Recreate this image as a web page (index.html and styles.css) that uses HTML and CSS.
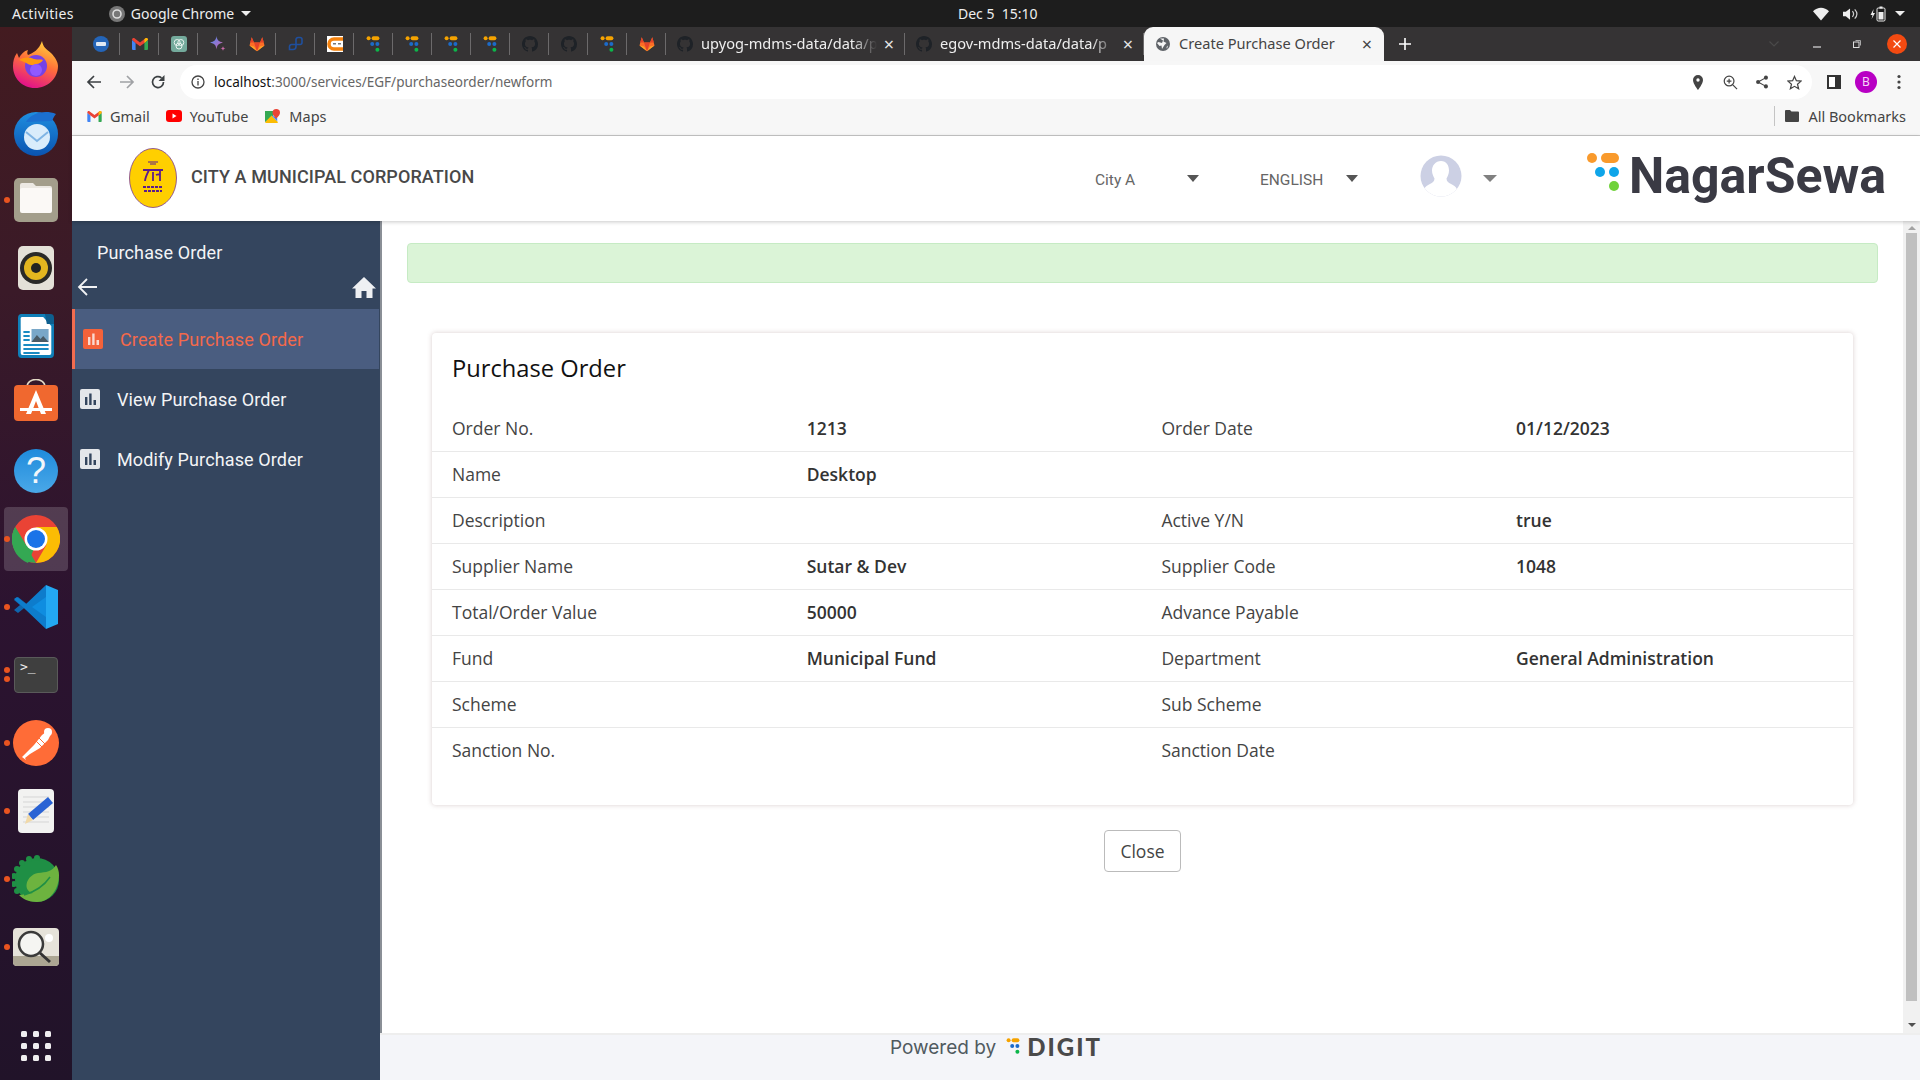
FILE: index.html
```html
<!DOCTYPE html>
<html lang="en">
<head>
<meta charset="utf-8">
<title>Create Purchase Order</title>
<link rel="stylesheet" href="styles.css">
</head>
<body>
<svg class="defs" aria-hidden="true">
  <defs>
    <symbol id="digit" viewBox="0 0 16 16">
      <circle cx="2.6" cy="2.2" r="2" fill="#f5a300"/><rect x="5.6" y="0.2" width="7.8" height="4" rx="2" fill="#f5a300"/>
      <circle cx="6.2" cy="8" r="2" fill="#1c6bc9"/><circle cx="11.4" cy="8" r="2" fill="#1c6bc9"/><circle cx="11.4" cy="13.8" r="2" fill="#0cb64a"/>
    </symbol>
    <symbol id="github" viewBox="0 0 16 16">
      <path fill="#1e2227" d="M8 0C3.58 0 0 3.58 0 8c0 3.54 2.29 6.53 5.47 7.59.4.07.55-.17.55-.38 0-.19-.01-.82-.01-1.49-2.01.37-2.53-.49-2.69-.94-.09-.23-.48-.94-.82-1.13-.28-.15-.68-.52-.01-.53.63-.01 1.08.58 1.23.82.72 1.21 1.87.87 2.33.66.07-.52.28-.87.51-1.07-1.78-.2-3.64-.89-3.64-3.95 0-.87.31-1.59.82-2.15-.08-.2-.36-1.02.08-2.12 0 0 .67-.21 2.2.82.64-.18 1.32-.27 2-.27.68 0 1.36.09 2 .27 1.53-1.04 2.2-.82 2.2-.82.44 1.1.16 1.92.08 2.12.51.56.82 1.27.82 2.15 0 3.07-1.87 3.75-3.65 3.95.29.25.54.73.54 1.48 0 1.07-.01 1.93-.01 2.2 0 .21.15.46.55.38A8.013 8.013 0 0016 8c0-4.42-3.58-8-8-8z"/>
    </symbol>
    <symbol id="gitlab" viewBox="0 0 16 16">
      <path fill="#fc6d26" d="M8 15.2.5 9.6 2.7 1.2 5 6.4h6l2.3-5.2 2.2 8.4z"/>
      <path fill="#e24329" d="M8 15.2 5 6.4h6zM2.7 1.2 5 6.4H1.2zM13.3 1.2 11 6.4h3.8z"/>
      <path fill="#fca326" d="M8 15.2.5 9.6l4.5 1zM8 15.2l7.5-5.6-4.5 1z"/>
    </symbol>
    <symbol id="gmail" viewBox="0 0 16 12">
      <path fill="#4285f4" d="M0 2v9a1 1 0 0 0 1 1h2.6V5z"/>
      <path fill="#34a853" d="M16 2v9a1 1 0 0 1-1 1h-2.6V5z"/>
      <path fill="#ea4335" d="M0 1.8C0 .4 1.6-.4 2.8.5L8 4.4l5.2-3.9C14.4-.4 16 .4 16 1.8L12.4 5 8 8.2 3.6 5z"/>
      <path fill="#fbbc04" d="M12.4 1.1 13.2.5C14.4-.4 16 .4 16 1.8L12.4 5z"/>
    </symbol>
    <symbol id="bars" viewBox="0 0 20 20">
      <rect class="bars-bg" width="20" height="20" rx="2"/>
      <path class="bars-fg" d="M5 8h2.4v8H5zM9.2 4.500h2.4V16H9.2zM13.500 11H16v5h-2.500z"/>
    </symbol>
  </defs>
</svg>

<header class="topbar">
  <span class="top-activities">Activities</span>
  <span class="top-app">
    <svg class="top-chrome" viewBox="0 0 16 16"><circle cx="8" cy="8" r="8" fill="#777"/><circle cx="8" cy="8" r="4" fill="none" stroke="#ddd" stroke-width="1.600"/></svg>
    Google Chrome <i class="caret caret-top"></i>
  </span>
  <time class="top-clock">Dec 5&nbsp; 15:10</time>
  <span class="top-tray">
    <svg viewBox="0 0 16 14" class="tray-wifi"><path fill="#eee" d="M0 4.300C4.500-.6 11.500-.6 16 4.300L8 13.500z"/></svg>
    <svg viewBox="0 0 16 14" class="tray-vol"><path fill="#eee" d="M0 4.500h3L7.500 1v12L3 9.500H0z"/><path d="M10 4c1.600 1.800 1.600 4.200 0 6M12.500 2c2.800 3 2.800 7 0 10" fill="none" stroke="#ccc" stroke-width="1.300"/></svg>
    <svg viewBox="0 0 16 16" class="tray-bat"><path fill="#eee" d="M3.600 3 .5 9h2L1.600 13 5 7H3z"/><rect x="7" y="2" width="8" height="13" rx="1.200" fill="none" stroke="#eee"/><rect x="9.500" y=".5" width="3" height="2" fill="#eee"/><rect x="8.500" y="6" width="5" height="7.500" fill="#eee"/></svg>
    <i class="caret caret-top"></i>
  </span>
</header>

<div class="desktop">
  <nav class="dock">
    <div class="dock-item">
      <svg viewBox="0 0 48 48" class="dock-icon"><defs><linearGradient id="ff" x1="0.700" y1="0" x2="0.300" y2="1"><stop offset="0" stop-color="#ffd13c"/><stop offset="0.450" stop-color="#ff7139"/><stop offset="0.950" stop-color="#e31587"/></linearGradient></defs><path fill="url(#ff)" d="M30 1c1 6 4 8 9 12 4 4 7 9 7 13 0 12-10 22-23 22S1 38 1 26c0-5 1-9 4-13l2 5c2-4 5-7 9-8-1 2-1 4 0 5 5-2 11-5 14-14z"/><circle cx="24" cy="26" r="11" fill="#7542e5"/><path fill="#ff980e" d="M7 20c5-3 10-3 15-1 4 1 7 0 9 1-1 2-4 4-7 4-3 2-6 1-8 0-3-2-6-3-9-4z"/><circle cx="24" cy="30" r="6" fill="#9059ff"/></svg>
    </div>
    <div class="dock-item">
      <svg viewBox="0 0 48 48" class="dock-icon"><defs><linearGradient id="tb" x1="0" y1="0" x2="0" y2="1"><stop offset="0" stop-color="#1f8fe0"/><stop offset="1" stop-color="#0a53b0"/></linearGradient></defs><circle cx="24" cy="26" r="22" fill="url(#tb)"/><path fill="#1b6fd0" d="M14 14C20 4 34 2 44 6c-2 2-3 5-4 7z"/><circle cx="25" cy="29" r="13" fill="#d9ecfb"/><path d="M14 24l11 9 11-9" fill="none" stroke="#7fb4e4" stroke-width="2"/></svg>
    </div>
    <div class="dock-item">
      <i class="dock-dot"></i>
      <svg viewBox="0 0 48 48" class="dock-icon"><rect x="2" y="2" width="44" height="44" rx="5" fill="#a39e8b"/><path fill="#ece9e3" d="M8 9a2 2 0 0 1 2-2h11l3 3h14a2 2 0 0 1 2 2v2H8z"/><rect x="8" y="12" width="32" height="25" rx="2" fill="#fbf9f6"/></svg>
    </div>
    <div class="dock-item">
      <svg viewBox="0 0 48 48" class="dock-icon"><rect x="6" y="2" width="36" height="44" rx="5" fill="#e4e1d8"/><circle cx="24" cy="24" r="16" fill="#2a2a28"/><circle cx="24" cy="24" r="12" fill="#e3b61f"/><circle cx="24" cy="24" r="5" fill="#222"/></svg>
    </div>
    <div class="dock-item">
      <svg viewBox="0 0 48 48" class="dock-icon"><g transform="translate(2.400 0) scale(.9 1)"><path fill="#0f7fb8" d="M8 2h26l10 10v30a4 4 0 0 1-4 4H8a4 4 0 0 1-4-4V6a4 4 0 0 1 4-4z"/><path fill="#fff" d="M8 5h24l9 9v27a2 2 0 0 1-2 2H9a2 2 0 0 1-2-2V6z"/><path fill="#0e5f8f" d="M34 2h6a4 4 0 0 1 4 4v6h-8z"/><path fill="#1a8ac2" d="M10 19h7v2h-7zM10 23h7v2h-7zM10 27h7v2h-7zM10 32h28v2H10zM10 36h28v2H10zM10 40h18v2H10z"/><rect x="19" y="17" width="19" height="13" fill="#79a7c8"/><path fill="#4a5b66" d="M19 30l6-7 4 4 3-3 6 6z"/></g></svg>
    </div>
    <div class="dock-item">
      <svg viewBox="0 0 48 48" class="dock-icon"><path d="M15 8c0-10 18-10 18 0" fill="none" stroke="#e3d9c5" stroke-width="1.600"/><rect x="2" y="6" width="44" height="36" rx="4" fill="#f0682f"/><path fill="#fff" d="M24 11l10 24h-5l-5-13-5 13h-5zM8 29h32v3H8z"/></svg>
    </div>
    <div class="dock-item">
      <span class="dock-help">?</span>
    </div>
    <div class="dock-item dock-active">
      <i class="dock-dot"></i>
      <svg viewBox="0 0 48 48" class="dock-icon"><circle cx="24" cy="24" r="24" fill="#ea4335"/><path fill="#34a853" d="M3.2 12 14 30l10-1-8 19C6 44 0 35 0 24c0-4 1-8 3.200-12z"/><path fill="#34a853" d="M24 48A24 24 0 0 1 3.200 12L14 30.500 24 48z"/><path fill="#fbbc04" d="M24 48 34.400 30 24 12h20.800A24 24 0 0 1 24 48z"/><circle cx="24" cy="24" r="11.500" fill="#fff"/><circle cx="24" cy="24" r="9" fill="#1a73e8"/></svg>
    </div>
    <div class="dock-item">
      <i class="dock-dot"></i>
      <svg viewBox="0 0 48 48" class="dock-icon"><path fill="#0f65ad" d="M2 17l4-3 10 8-10 8-4-3 6-5z"/><path fill="#0d7ccc" d="M34 2 14 21 5 14 2 16l12 11L34 46z"/><path fill="#23a8f2" d="M34 2l12 5v34l-12 5z"/><path fill="#0f8de0" d="M34 14v20L20 24z"/></svg>
    </div>
    <div class="dock-item">
      <i class="dock-dot dot-term-a"></i><i class="dock-dot dot-term-b"></i>
      <div class="dock-term"><span>&gt;_</span></div>
    </div>
    <div class="dock-item">
      <i class="dock-dot"></i>
      <svg viewBox="0 0 48 48" class="dock-icon"><circle cx="24" cy="24" r="23" fill="#ff6c37"/><path fill="#fff" d="M10 38 22 26l8-10 4-3 5 2-3 6-8 8-10 6-5 4 1 2z"/><circle cx="36" cy="13" r="4" fill="#fff"/><path d="M24 22l6 6M27 19l6 6" stroke="#ff6c37"/></svg>
    </div>
    <div class="dock-item">
      <i class="dock-dot"></i>
      <svg viewBox="0 0 48 48" class="dock-icon"><rect x="6" y="2" width="36" height="44" rx="4" fill="#f2f2f1"/><path stroke="#d5d5d5" d="M11 10h26M11 15h26M11 20h26M11 25h26M11 30h26M11 35h26"/><path fill="#2a63d4" d="M36 10l5 6-20 17-5-6z"/><path fill="#f1d9a8" d="M16 27l5 6-8 4z"/></svg>
    </div>
    <div class="dock-item">
      <i class="dock-dot"></i>
      <svg viewBox="0 0 48 48" class="dock-icon"><circle cx="25" cy="25" r="22" fill="#1f8f45"/><g fill="#1f8f45"><circle cx="25" cy="3" r="3"/><circle cx="17" cy="4" r="3"/><circle cx="10" cy="8" r="3"/><circle cx="5" cy="14" r="3"/><circle cx="2" cy="21" r="3"/><circle cx="2" cy="29" r="3"/><circle cx="5" cy="36" r="3"/></g><path fill="#6db33f" d="M47 20c0 14-9 27-22 27-9 0-14-3-18-7 8-1 14-2 14-2C10 36 14 20 26 18c8-1 14-1 18-8 2 3 3 6 3 10z"/><path d="M12 40c10-3 20-9 26-18" stroke="#1f8f45" stroke-width="1.500" fill="none"/></svg>
    </div>
    <div class="dock-item">
      <i class="dock-dot"></i>
      <svg viewBox="0 0 48 48" class="dock-icon"><rect x="1" y="5" width="46" height="38" rx="4" fill="#e6e3da"/><path fill="#aca693" d="M1 33h46v6a4 4 0 0 1-4 4H5a4 4 0 0 1-4-4z"/><circle cx="19" cy="21" r="12" fill="#f5f5f2" stroke="#3a3a3a" stroke-width="2.500"/><path d="M28 30l10 9" stroke="#333" stroke-width="3"/><circle cx="37" cy="15" r="4" fill="#fff"/></svg>
    </div>
    <div class="dock-grid"><i></i><i></i><i></i><i></i><i></i><i></i><i></i><i></i><i></i></div>
  </nav>

  <div class="browser">
    <div class="tabstrip">
      <span class="pin">
        <svg viewBox="0 0 16 16"><circle cx="8" cy="8" r="8" fill="#2465b8"/><rect x="3" y="6" width="10" height="4" rx="1" fill="#dfe9f5"/></svg>
      </span>
      <span class="pin"><svg viewBox="0 0 16 12"><use href="#gmail"/></svg></span>
      <span class="pin">
        <svg viewBox="0 0 16 16"><rect width="16" height="16" rx="3" fill="#74aa9c"/><circle cx="6.200" cy="6.500" r="3" fill="none" stroke="#e8f2ef"/><circle cx="9.800" cy="6.500" r="3" fill="none" stroke="#e8f2ef"/><circle cx="8" cy="10" r="3" fill="none" stroke="#e8f2ef"/></svg>
      </span>
      <span class="pin">
        <svg viewBox="0 0 16 16"><defs><linearGradient id="gem" x1="0" y1="0" x2="1" y2="1"><stop offset="0" stop-color="#4b8df0"/><stop offset="0.600" stop-color="#9b72cb"/><stop offset="1" stop-color="#d96570"/></linearGradient></defs><path fill="url(#gem)" d="M6.500 0C7 4 8.500 5.500 13 6.500 8.500 7.500 7 9 6.500 13.500 6 9 4.500 7.500 0 6.500 4.500 5.500 6 4 6.500 0z"/><path fill="#c86aa8" d="M13 10c.2 1.500.8 2.200 2.500 2.500-1.700.3-2.300 1-2.500 2.500-.2-1.500-.8-2.200-2.500-2.500 1.700-.3 2.300-1 2.500-2.500z"/></svg>
      </span>
      <span class="pin"><svg viewBox="0 0 16 16"><use href="#gitlab"/></svg></span>
      <span class="pin">
        <svg viewBox="0 0 16 16"><path d="M1.500 13.500v-3a2 2 0 0 1 2-2H12a2 2 0 0 0 2-2v-3A2 2 0 0 0 12 1.500h-2a2 2 0 0 0-2 2v7a3 3 0 0 1-3 3z" fill="none" stroke="#1f4f9e" stroke-width="1.600"/></svg>
      </span>
      <span class="pin">
        <svg viewBox="0 0 16 16"><rect width="16" height="16" fill="#fff"/><path d="M16 3H7a5 5 0 0 0 0 10h9" fill="none" stroke="#f5820d" stroke-width="3.500"/><rect x="6" y="7" width="3" height="1.500" fill="#777"/><rect x="11" y="7" width="3" height="1.500" fill="#777"/></svg>
      </span>
      <span class="pin"><svg viewBox="0 0 16 16"><use href="#digit"/></svg></span>
      <span class="pin"><svg viewBox="0 0 16 16"><use href="#digit"/></svg></span>
      <span class="pin"><svg viewBox="0 0 16 16"><use href="#digit"/></svg></span>
      <span class="pin"><svg viewBox="0 0 16 16"><use href="#digit"/></svg></span>
      <span class="pin"><svg viewBox="0 0 16 16"><use href="#github"/></svg></span>
      <span class="pin"><svg viewBox="0 0 16 16"><use href="#github"/></svg></span>
      <span class="pin"><svg viewBox="0 0 16 16"><use href="#digit"/></svg></span>
      <span class="pin pin-last"><svg viewBox="0 0 16 16"><use href="#gitlab"/></svg></span>
      <span class="tab tab-sep">
        <svg viewBox="0 0 16 16"><use href="#github"/></svg>
        <span class="tab-title">upyog-mdms-data/data/p</span>
        <span class="tab-x">×</span>
      </span>
      <span class="tab tab-sep">
        <svg viewBox="0 0 16 16"><use href="#github"/></svg>
        <span class="tab-title">egov-mdms-data/data/p</span>
        <span class="tab-x">×</span>
      </span>
      <span class="tab tab-active">
        <svg viewBox="0 0 16 16"><circle cx="8" cy="8" r="7" fill="#5f6368"/><path fill="#f6f6f6" d="M5 2.500 8 4.500 7 7 3.500 6 2 7 4.500 10 6.500 9.500 7 13 9.500 9l2-2-3-1.500.5-3zM13 9.500l-1.500 1.500.5 2z"/></svg>
        <span class="tab-title">Create Purchase Order</span>
        <span class="tab-x">×</span>
      </span>
      <span class="tab-new">
        <svg viewBox="0 0 12 12"><path d="M6 0v12M0 6h12" stroke="#fff" stroke-width="1.600"/></svg>
      </span>
      <span class="win-ctrls">
        <svg class="win-chev" viewBox="0 0 10 6"><path d="M.5.5 5 5 9.500.5" fill="none" stroke="#4a4a4a" stroke-width="1.200"/></svg>
        <svg class="win-min" viewBox="0 0 8 8"><path d="M0 7h8" stroke="#ddd" stroke-width="1.200"/></svg>
        <svg class="win-max" viewBox="0 0 8 8"><rect x=".5" y="2" width="5.500" height="5.500" fill="none" stroke="#ddd"/><path d="M2.500 .5h5v5" fill="none" stroke="#aaa"/></svg>
        <span class="win-close"><svg viewBox="0 0 8 8"><path d="M.5.5l7 7M7.500.5l-7 7" stroke="#fff" stroke-width="1.200"/></svg></span>
      </span>
    </div>

    <div class="toolbar">
      <svg class="tb-ic tb-back" viewBox="0 0 16 16"><path d="M15 8H2M8 2 2 8l6 6" fill="none" stroke="#3c4043" stroke-width="1.700"/></svg>
      <svg class="tb-ic tb-fwd" viewBox="0 0 16 16"><path d="M1 8h13M8 2l6 6-6 6" fill="none" stroke="#a0a2a5" stroke-width="1.700"/></svg>
      <svg class="tb-ic tb-rel" viewBox="0 0 16 16"><path d="M13.500 8A5.500 5.500 0 1 1 11.500 3.800" fill="none" stroke="#3c4043" stroke-width="1.700"/><path d="M14.500 1v6h-6z" fill="#3c4043"/></svg>
      <div class="omnibox">
        <svg class="omni-info" viewBox="0 0 14 14"><circle cx="7" cy="7" r="6" fill="none" stroke="#444" stroke-width="1.300"/><path d="M7 6v4.500M7 3.500v1.500" stroke="#444" stroke-width="1.300"/></svg>
        <span class="url"><b>localhost</b>:3000/services/EGF/purchaseorder/newform</span>
        <span class="omni-right">
          <svg viewBox="0 0 14 18" class="om-pin"><path fill="#444" fill-rule="evenodd" d="M7 0a6 6 0 0 1 6 6c0 4.500-6 12-6 12S1 10.500 1 6a6 6 0 0 1 6-6zm0 4a2 2 0 1 0 0 4 2 2 0 0 0 0-4z"/></svg>
          <svg viewBox="0 0 16 16" class="om-zoom"><circle cx="6.500" cy="6.500" r="5.200" fill="none" stroke="#444" stroke-width="1.300"/><path d="M10.500 10.500 15 15M6.500 4v5M4 6.500h5" stroke="#444" stroke-width="1.300"/></svg>
          <svg viewBox="0 0 16 16" class="om-share"><path d="M12.500 3 3.500 8l9 5" fill="none" stroke="#444" stroke-width="1.300"/><circle cx="12.500" cy="3" r="2.300" fill="#444"/><circle cx="3.500" cy="8" r="2.300" fill="#444"/><circle cx="12.500" cy="13" r="2.300" fill="#444"/></svg>
          <svg viewBox="0 0 16 16" class="om-star"><path d="M8 1.500l2 4.600 5 .4-3.800 3.300 1.200 4.900L8 12.100l-4.400 2.600 1.200-4.900L1 6.500l5-.4z" fill="none" stroke="#444" stroke-width="1.300"/></svg>
        </span>
      </div>
      <svg class="tb-panel" viewBox="0 0 14 14"><path fill="#333" d="M0 0h14v14H0z"/><path fill="#fff" d="M2 2h6v10H2z"/></svg>
      <span class="tb-avatar">B</span>
      <svg class="tb-menu" viewBox="0 0 4 16"><circle cx="2" cy="2.500" r="1.600" fill="#444"/><circle cx="2" cy="8" r="1.600" fill="#444"/><circle cx="2" cy="13.500" r="1.600" fill="#444"/></svg>
    </div>

    <div class="bookmarks">
      <span class="bm bm-gmail"><svg viewBox="0 0 16 12"><use href="#gmail"/></svg>Gmail</span>
      <span class="bm bm-yt"><svg viewBox="0 0 16 12"><rect width="16" height="12" rx="3" fill="#f00"/><path d="M6.500 3.500v5l4-2.500z" fill="#fff"/></svg>YouTube</span>
      <span class="bm bm-maps"><svg viewBox="0 0 16 16"><path fill="#34a853" d="M0 2h9v5L0 14z"/><path fill="#fbbc04" d="M0 14 7 7l7 7-1 1H1z"/><path fill="#4285f4" d="M7 7l6 6V9z"/><path fill="#ea4335" d="M12 0a4 4 0 0 1 4 4c0 3-4 6-4 6S8 7 8 4a4 4 0 0 1 4-4z"/></svg>Maps</span>
      <span class="bm bm-all"><svg viewBox="0 0 14 12"><path fill="#444" d="M0 1a1 1 0 0 1 1-1h4l1.500 1.500H13a1 1 0 0 1 1 1V11a1 1 0 0 1-1 1H1a1 1 0 0 1-1-1z"/></svg>All Bookmarks</span>
    </div>

    <div class="app">
      <header class="app-header">
        <svg class="city-logo" viewBox="0 0 48 60"><ellipse cx="24" cy="30" rx="23.500" ry="29.500" fill="#ffcf00" stroke="#7a3a8c" stroke-width="0.800"/><g fill="none" stroke="#5c1d8a"><path d="M19 14h10M21 16h6" stroke-width="1.200"/><path d="M14 22h20M20 22c-2 4-4 8-4 11M24 24v9M31 22v11M27 27c2-1 3-1 4 0" stroke-width="1.800"/><path d="M14 39h20M15 43h18" stroke-width="2" stroke-dasharray="3 1"/></g></svg>
        <span class="city-name">CITY A MUNICIPAL CORPORATION</span>
        <span class="hd-city">City A</span><i class="caret caret-hd caret-city"></i>
        <span class="hd-lang">ENGLISH</span><i class="caret caret-hd caret-lang"></i>
        <svg class="hd-avatar" viewBox="0 0 42 42"><clipPath id="av"><circle cx="21" cy="21" r="20.500"/></clipPath><circle cx="21" cy="21" r="20.500" fill="#ccd0e4"/><path clip-path="url(#av)" fill="#fff" d="M21 6c5.500 0 8 4.500 8 9.500 0 3.500-1.500 6-2.500 8 0 3 2 4 5.500 6 4 2 5 4 5 6v8H4v-8c0-2 1-4 5-6 3.500-2 5.500-3 5.500-6-1-2-2.500-4.500-2.500-8C12 10.500 15.500 6 21 6z"/></svg>
        <i class="caret caret-user"></i>
        <span class="brand">
          <svg class="brand-dots" viewBox="0 0 32 40"><circle cx="5" cy="5" r="5" fill="#f99a2c"/><rect x="14" y="0" width="18" height="10" rx="5" fill="#f99a2c"/><circle cx="13" cy="19" r="5" fill="#0fa5e9"/><circle cx="27" cy="19" r="5" fill="#0fa5e9"/><circle cx="27" cy="33" r="5" fill="#6fd23a"/></svg>
          <span class="brand-name">NagarSewa</span>
        </span>
      </header>

      <div class="app-body">
        <aside class="sidebar">
          <div class="side-title">Purchase Order</div>
          <div class="side-tools">
            <svg class="side-back" viewBox="0 0 20 20"><path d="M20 10H2M10 2 2 10l8 8" fill="none" stroke="#f1f2f4" stroke-width="1.800"/></svg>
            <svg class="side-home" viewBox="0 0 24 21"><path fill="#eef0f3" d="M12 0 0 11.500h3.500V21h6v-7h5v7h6v-9.500H24z"/></svg>
          </div>
          <a class="side-item side-active"><svg class="side-ic"><use href="#bars"/></svg><span>Create Purchase Order</span></a>
          <a class="side-item"><svg class="side-ic"><use href="#bars"/></svg><span>View Purchase Order</span></a>
          <a class="side-item"><svg class="side-ic"><use href="#bars"/></svg><span>Modify Purchase Order</span></a>
        </aside>

        <div class="page">
          <div class="page-scroll">
            <main class="content">
              <div class="alert"></div>
              <section class="card">
                <h2 class="card-title">Purchase Order</h2>
                <div class="row"><span class="lbl">Order No.</span><span class="val">1213</span><span class="lbl">Order Date</span><span class="val">01/12/2023</span></div>
                <div class="row"><span class="lbl">Name</span><span class="val">Desktop</span><span></span><span></span></div>
                <div class="row"><span class="lbl">Description</span><span class="val"></span><span class="lbl">Active Y/N</span><span class="val">true</span></div>
                <div class="row"><span class="lbl">Supplier Name</span><span class="val">Sutar &amp; Dev</span><span class="lbl">Supplier Code</span><span class="val">1048</span></div>
                <div class="row"><span class="lbl">Total/Order Value</span><span class="val">50000</span><span class="lbl">Advance Payable</span><span class="val"></span></div>
                <div class="row"><span class="lbl">Fund</span><span class="val">Municipal Fund</span><span class="lbl">Department</span><span class="val">General Administration</span></div>
                <div class="row"><span class="lbl">Scheme</span><span class="val"></span><span class="lbl">Sub Scheme</span><span class="val"></span></div>
                <div class="row row-last"><span class="lbl">Sanction No.</span><span class="val"></span><span class="lbl">Sanction Date</span><span class="val"></span></div>
              </section>
              <div class="actions"><button class="btn-close" type="button">Close</button></div>
            </main>
            <div class="scrollbar">
              <i class="sb-up"></i>
              <div class="sb-thumb"></div>
              <i class="sb-down"></i>
            </div>
          </div>
          <footer class="footer">
            <span class="powered">Powered by</span>
            <svg class="digit-dots" viewBox="0 0 16 16"><use href="#digit"/></svg>
            <span class="digit-word">DIGIT</span>
          </footer>
        </div>
      </div>
    </div>
  </div>
</div>
</body>
</html>
```

FILE: styles.css
```css
* { box-sizing: border-box; }
html, body { margin: 0; padding: 0; }
body {
  width: 1920px;
  height: 1080px;
  overflow: hidden;
  display: flex;
  flex-direction: column;
  font-family: "Noto Sans", "Open Sans", sans-serif;
  background: #fff;
}
.defs { width: 0; height: 0; position: absolute; }
i { display: block; font-style: normal; }

/* carets */
.caret { width: 0; height: 0; border-style: solid; border-color: transparent; border-bottom-width: 0; }
.caret-top { display: inline-block; border-width: 5px 5px 0; border-top-color: #eee; vertical-align: middle; margin-left: 1px; }
.caret-hd { border-width: 7px 6.5px 0; border-top-color: #555; }
.caret-user { border-width: 7px 7px 0; border-top-color: #808080; margin-left: 21px; }

/* GNOME top bar */
.topbar {
  height: 27px;
  flex: none;
  background: #1d1d1d;
  color: #eee;
  font-size: 14px;
  display: flex;
  align-items: center;
  position: relative;
}
.top-activities { margin-left: 12px; letter-spacing: .35px; }
.top-app { margin-left: 35px; display: flex; align-items: center; gap: 6px; }
.top-chrome { width: 16px; height: 16px; }
.top-clock { position: absolute; left: 958px; font-size: 14px; }
.top-tray { margin-left: auto; margin-right: 15px; display: flex; align-items: center; }
.tray-wifi { width: 16px; height: 14px; }
.tray-vol { width: 15px; height: 14px; margin-left: 14px; }
.tray-bat { width: 16px; height: 16px; margin-left: 12px; }
.top-tray .caret-top { margin-left: 9px; }

.desktop { flex: 1; display: flex; min-height: 0; }

/* dock */
.dock {
  width: 72px;
  flex: none;
  background: linear-gradient(180deg, #431b20 0%, #3a1a28 25%, #2c1330 55%, #211329 100%);
  display: flex;
  flex-direction: column;
  padding-top: 3px;
}
.dock-item {
  height: 67.9px;
  flex: none;
  position: relative;
  display: flex;
  align-items: center;
  justify-content: center;
}
.dock-active::before {
  content: "";
  position: absolute;
  left: 4px; right: 4px; top: 2px; bottom: 2px;
  background: rgba(255,255,255,.17);
  border-radius: 4px;
}
.dock-icon { width: 48px; height: 48px; position: relative; }
.dock-dot {
  position: absolute;
  left: 4px; top: 31px;
  width: 6px; height: 6px;
  border-radius: 50%;
  background: #e95420;
  z-index: 1;
}
.dot-term-a { top: 26px; }
.dot-term-b { top: 35px; }
.dock-help {
  width: 44px; height: 44px;
  border-radius: 50%;
  background: linear-gradient(180deg, #1f8bdc, #4aa8e8);
  color: #f2f6fa;
  font: 400 36px/44px "Liberation Sans", sans-serif;
  text-align: center;
}
.dock-term {
  width: 44px; height: 36px;
  background: #3f3f3f;
  border: 1px solid #5a5a5a;
  border-radius: 4px;
  color: #eee;
  font: 13px/16px "DejaVu Sans Mono", monospace;
  padding: 1px 0 0 5px;
}
.dock-grid {
  margin-top: auto;
  margin-bottom: 19px;
  align-self: center;
  display: grid;
  grid-template-columns: repeat(3, 6px);
  grid-auto-rows: 6px;
  gap: 6px;
}
.dock-grid i { background: #f0eef0; border-radius: 1.500px; }

/* browser */
.browser { flex: 1; min-width: 0; display: flex; flex-direction: column; }

.tabstrip {
  height: 34px;
  flex: none;
  background: #353334;
  display: flex;
  align-items: stretch;
  padding-left: 9px;
  color: #eee;
  font-size: 14.6px;
}
.pin {
  width: 39px;
  display: flex;
  align-items: center;
  justify-content: center;
  position: relative;
}
.pin svg { width: 16px; height: 16px; }
.pin::after, .tab-sep::after {
  content: "";
  position: absolute;
  right: 0; top: 6px; bottom: 6px;
  width: 1px;
  background: #6c6a6b;
}
.tab {
  width: 239px;
  display: flex;
  align-items: center;
  padding: 0 9px 0 11px;
  position: relative;
  gap: 8px;
}
.tab > svg { width: 16px; height: 16px; flex: none; }
.tab-title {
  flex: 1;
  min-width: 0;
  margin: 0 -3px 2px 0;
  overflow: hidden;
  white-space: nowrap;
  -webkit-mask-image: linear-gradient(90deg, #000 86%, transparent 100%);
  mask-image: linear-gradient(90deg, #000 86%, transparent 100%);
}
.tab-x { font-size: 18px; line-height: 1; width: 14px; text-align: center; color: #e6e6e6; }
.tab-active {
  width: 240px;
  background: #f6f6f6;
  color: #444;
  border-radius: 9px 9px 0 0;
  padding: 0 10px 0 11px;
}
.tab-active .tab-x { color: #444; }
.tab-active .tab-title { -webkit-mask-image: none; mask-image: none; }
.tab-new { display: flex; align-items: center; margin-left: 15px; }
.tab-new svg { width: 12px; height: 12px; }
.win-ctrls { margin-left: auto; display: flex; align-items: center; margin-right: 13px; }
.win-chev { width: 10px; height: 6px; margin-right: 34px; }
.win-min { width: 8px; height: 8px; margin-right: 32px; }
.win-max { width: 8px; height: 8px; margin-right: 26px; }
.win-close {
  width: 20px; height: 20px; border-radius: 50%;
  background: #f34a11;
  display: flex; align-items: center; justify-content: center;
}
.win-close svg { width: 8px; height: 8px; }

.toolbar {
  height: 38px;
  flex: none;
  background: #f7f7f7;
  display: flex;
  align-items: flex-end;
  padding-left: 14px;
}
.tb-ic { width: 16px; height: 16px; margin-bottom: 9px; }
.tb-fwd { margin-left: 17px; }
.tb-rel { margin-left: 15px; }
.omnibox {
  width: 1632px;
  height: 34px;
  margin-left: 14px;
  background: #fff;
  border-radius: 17px;
  display: flex;
  align-items: center;
  padding-left: 11px;
}
.omni-info { width: 14px; height: 14px; }
.url { margin-left: 9px; font-size: 13.56px; color: #666; white-space: nowrap; margin-bottom: 1px; }
.url b { font-weight: 400; color: #111; }
.omni-right { margin-left: auto; display: flex; align-items: center; margin-right: 10.5px; }
.om-pin { width: 12px; height: 15px; }
.om-zoom { width: 15px; height: 15px; margin-left: 18.5px; }
.om-share { width: 14px; height: 14px; margin-left: 17.5px; }
.om-star { width: 15px; height: 15px; margin-left: 17.5px; }
.tb-panel { width: 14px; height: 14px; margin: 0 0 10px 15px; }
.tb-avatar {
  width: 22px; height: 22px;
  margin: 0 0 6px 14px;
  border-radius: 50%;
  background: #b800c4;
  color: #f6d8f8;
  font-size: 12px;
  line-height: 22px;
  text-align: center;
}
.tb-menu { width: 4px; height: 16px; margin: 0 0 9px 20px; }

.bookmarks {
  height: 37px;
  flex: none;
  background: #f7f7f7;
  border-bottom: 1px solid #c8c8c8;
  display: flex;
  align-items: center;
  padding: 0 0 2px 15px;
  font-size: 14.5px;
  color: #444;
}
.bm { display: flex; align-items: center; white-space: nowrap; }
.bm svg { flex: none; }
.bm-gmail svg { width: 15px; height: 11px; margin-right: 8px; }
.bm-yt { margin-left: 16px; }
.bm-yt svg { width: 16px; height: 12px; margin-right: 8px; }
.bm-maps { margin-left: 17px; }
.bm-maps svg { width: 15px; height: 15px; margin-right: 9px; }
.bm-all {
  margin-left: auto;
  margin-right: 14px;
  padding-left: 10px;
  border-left: 1px solid #c4c4c4;
  height: 20px;
}
.bm-all svg { width: 14px; height: 12px; margin-right: 9px; }

/* app */
.app { flex: 1; min-height: 0; display: flex; flex-direction: column; }
.app-header {
  height: 85px;
  flex: none;
  background: #fff;
  display: flex;
  align-items: center;
  padding-left: 57px;
  box-shadow: 0 1px 4px rgba(0,0,0,.22);
  position: relative;
  z-index: 2;
  font-family: Roboto, sans-serif;
}
.city-logo { width: 48px; height: 60px; flex: none; margin-top: -2px; }
.city-name { margin-left: 14px; font-size: 18px; font-weight: 500; letter-spacing: .09px; color: #484848; white-space: nowrap; width: 904px; margin-top: -5px; }
.hd-city { font-size: 15.5px; color: #666; width: 92px; margin-top: 2px; }
.caret-city { margin-right: 61px; margin-top: -1px; }
.hd-lang { font-size: 15.5px; color: #666; width: 86px; margin-top: 2px; }
.caret-lang { margin-right: 61.5px; margin-top: -1px; }
.hd-avatar { width: 42px; height: 42px; flex: none; margin-top: -5px; }
.brand { margin-left: 90.5px; display: flex; align-items: flex-start; }
.brand-dots { width: 32px; height: 40px; margin-top: 3px; flex: none; }
.brand-name {
  font-size: 50px;
  font-weight: 700;
  line-height: 64px;
  color: #3a3a44;
  margin-left: 10px;
  margin-top: -6px;
  white-space: nowrap;
}

.app-body { flex: 1; min-height: 0; display: flex; }

.sidebar {
  width: 310px;
  flex: none;
  background: #34455e;
  border-right: 2px solid #8a8f96;
  font-family: Roboto, sans-serif;
  font-size: 18px;
  letter-spacing: .12px;
  color: #f3f4f6;
}
.side-title { padding: 20px 0 0 25px; line-height: 24px; }
.side-tools {
  height: 44px;
  display: flex;
  align-items: center;
  justify-content: space-between;
  padding: 0 4px 0 5px;
}
.side-back { width: 20px; height: 20px; }
.side-home { width: 24px; height: 21px; }
.side-item {
  height: 60px;
  display: flex;
  align-items: center;
  padding-left: 8px;
  gap: 17px;
  margin-right: 1px;
  --bars-bg: #e4e6ea;
  --bars-fg: #34455e;
}
.side-ic { width: 20px; height: 20px; flex: none; }
.bars-bg { fill: var(--bars-bg); }
.bars-fg { fill: var(--bars-fg); }
.side-active {
  background: #4a5d80;
  border-left: 3px solid #f26c4f;
  color: #f4694a;
  --bars-bg: #f4623a;
  --bars-fg: #fbd9cf;
}

.page { flex: 1; min-width: 0; display: flex; flex-direction: column; }
.page-scroll { flex: 1; min-height: 0; display: flex; background: #fff; }
.content { flex: 1; min-width: 0; padding: 22px 25px 0; font-family: "Open Sans", sans-serif; }
.alert {
  height: 40px;
  background: #dbf4d7;
  border: 1px solid #c6ebc4;
  border-radius: 4px;
}
.card {
  margin: 50px 25px 0;
  padding: 0 0 31px;
  background: #fff;
  border-radius: 4px;
  box-shadow: 0 0 5px rgba(120,80,80,.28);
}
.card-title {
  margin: 0;
  height: 73px;
  padding: 20px 0 0 20px;
  font-size: 23.7px;
  line-height: 30px;
  font-weight: 400;
  color: #111;
}
.row {
  display: grid;
  grid-template-columns: repeat(4, 354.7px);
  height: 46px;
  padding-bottom: 2px;
  align-items: center;
  border-bottom: 1px solid #e9e9e9;
  font-size: 17.5px;
}
.row > span { padding-left: 20px; white-space: nowrap; }
.row-last { border-bottom: 0; }
.lbl { color: #444; }
.val { color: #333; font-weight: 600; }
.actions { display: flex; justify-content: center; margin-top: 25px; }
.btn-close {
  width: 77px;
  height: 42px;
  background: #fff;
  border: 1px solid #bbb;
  border-radius: 4px;
  font: 17.5px "Open Sans", sans-serif;
  color: #444;
  padding: 0;
}

.scrollbar {
  width: 17px;
  flex: none;
  background: #f1f1f1;
  display: flex;
  flex-direction: column;
  align-items: center;
}
.sb-up { width: 0; height: 0; margin-top: 5px; border-style: solid; border-width: 0 4px 4px; border-color: transparent transparent #a3a3a3; }
.sb-thumb { width: 11px; height: 768px; margin-top: 3px; background: #c0c0c0; }
.sb-down { width: 0; height: 0; margin-top: 22px; border-style: solid; border-width: 4px 4px 0; border-color: #505050 transparent transparent; }

.footer {
  height: 47px;
  flex: none;
  background: #f4f5f9;
  border-top: 2px solid #eee;
  display: flex;
  align-items: flex-start;
  padding-left: 510px;
  margin-left: -2px;
}
.powered { font: 19px/26px Inter, Roboto, sans-serif; color: #505a5f; margin-top: 0; }
.digit-dots { width: 16px; height: 16px; margin: 3px 0 0 10px; }
.digit-word { font: 900 24px/24px Lato, Roboto, sans-serif; letter-spacing: 2px; color: #4a4a4a; margin: 0 0 0 5px; }
```
